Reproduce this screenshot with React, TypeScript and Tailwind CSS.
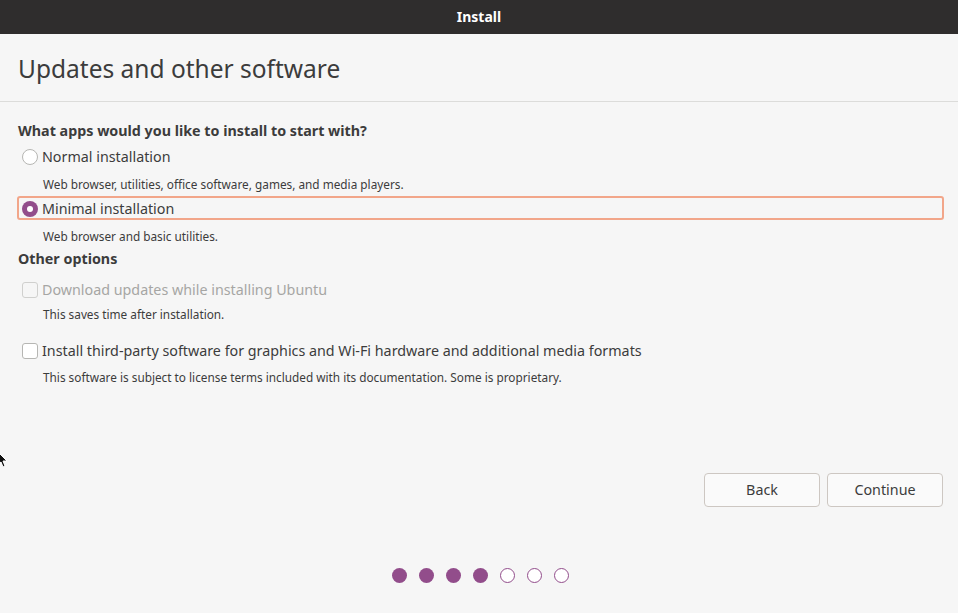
import React from 'react';

const font = { fontFamily: '"Noto Sans", "Open Sans", sans-serif' };

function Radio({ checked }: { checked?: boolean }) {
  if (checked) {
    return (
      <span className="flex h-[16px] w-[16px] shrink-0 items-center justify-center rounded-full bg-[#924d8b]">
        <span className="h-[6px] w-[6px] rounded-full bg-white" />
      </span>
    );
  }
  return <span className="h-[16px] w-[16px] shrink-0 rounded-full border border-[#b6b6b3] bg-white" />;
}

function Check({ disabled }: { disabled?: boolean }) {
  return (
    <span
      className={
        'h-[16px] w-[16px] shrink-0 rounded-[3px] border ' +
        (disabled ? 'border-[#d0d0ce] bg-[#f6f6f6]' : 'border-[#b6b6b3] bg-white')
      }
    />
  );
}

export default function App(): React.JSX.Element {
  const steps = [true, true, true, true, false, false, false];

  return (
    <div className="relative flex h-[613px] w-full flex-col overflow-hidden bg-[#f6f6f6] text-[#3c3c3c]" style={font}>
      <header className="flex h-[34px] shrink-0 items-center justify-center bg-[#2f2d2d] pb-[2px] text-[14px] font-bold text-white">
        Install
      </header>

      <div className="flex h-[68px] shrink-0 items-center border-b border-[#dcdcda] pl-[18px] pt-[4px]">
        <h1 className="text-[24.5px] leading-none">Updates and other software</h1>
      </div>

      <section className="flex flex-col pl-[18px] pr-[14px] text-[14.3px]">
        <p className="mt-[18px] flex h-5 items-center pt-[2px] font-bold">What apps would you like to install to start with?</p>
        <label className="mt-[6px] flex h-5 items-center gap-[4px] pl-[4px] pt-[2px]">
          <Radio />
          <span>Normal installation</span>
        </label>
        <p className="mt-[11px] flex h-4 items-center pl-[25px] text-[11.8px]">
          Web browser, utilities, office software, games, and media players.
        </p>
        <label className="-ml-[1px] mt-[3px] flex h-[24px] items-center gap-[4px] rounded-[3px] border-2 border-[#f2a68a] pl-[3px] pt-[2px]">
          <Radio checked />
          <span>Minimal installation</span>
        </label>
        <p className="mt-[9px] flex h-4 items-center pl-[25px] text-[11.8px]">Web browser and basic utilities.</p>

        <p className="mt-[3px] flex h-5 items-center pt-[2px] font-bold">Other options</p>
        <label className="mt-[11px] flex h-5 items-center gap-[4px] pl-[4px] pt-[2px] text-[#a6a6a4]">
          <Check disabled />
          <span>Download updates while installing Ubuntu</span>
        </label>
        <p className="mt-[8px] flex h-4 items-center pl-[25px] text-[11.8px]">This saves time after installation.</p>
        <label className="mt-[17px] flex h-5 items-center gap-[4px] pl-[4px] pt-[2px]">
          <Check />
          <span>Install third-party software for graphics and Wi-Fi hardware and additional media formats</span>
        </label>
        <p className="mt-[10px] flex h-4 items-center pl-[25px] text-[11.8px]">
          This software is subject to license terms included with its documentation. Some is proprietary.
        </p>
      </section>

      <div className="flex-1" />

      <div className="flex shrink-0 justify-end gap-[7px] pr-[15px]">
        <button type="button" className="h-[34px] w-[116px] rounded-[4px] border border-[#cdc7c2] bg-[#fafafa] text-[14.3px] text-[#3c3c3c]">
          Back
        </button>
        <button type="button" className="h-[34px] w-[116px] rounded-[4px] border border-[#cdc7c2] bg-[#fafafa] text-[14.3px] text-[#3c3c3c]">
          Continue
        </button>
      </div>

      <div className="mb-[30px] mt-[61px] flex shrink-0 justify-center gap-[12px] pl-[2px]">
        {steps.map((done, i) => (
          <span
            key={i}
            className={
              'h-[15px] w-[15px] rounded-full ' +
              (done ? 'bg-[#924d8b]' : 'border border-[#924d8b] bg-white')
            }
          />
        ))}
      </div>

      {/* mouse pointer at the left edge */}
      <svg className="absolute left-0 top-[451px]" width="10" height="16" viewBox="0 0 10 16">
        <path d="M-3 0 L7 10 L3 10 L5 15 L3 16 L1 11 L-3 14 Z" fill="#111" stroke="#fff" strokeWidth="1" />
      </svg>
    </div>
  );
}
